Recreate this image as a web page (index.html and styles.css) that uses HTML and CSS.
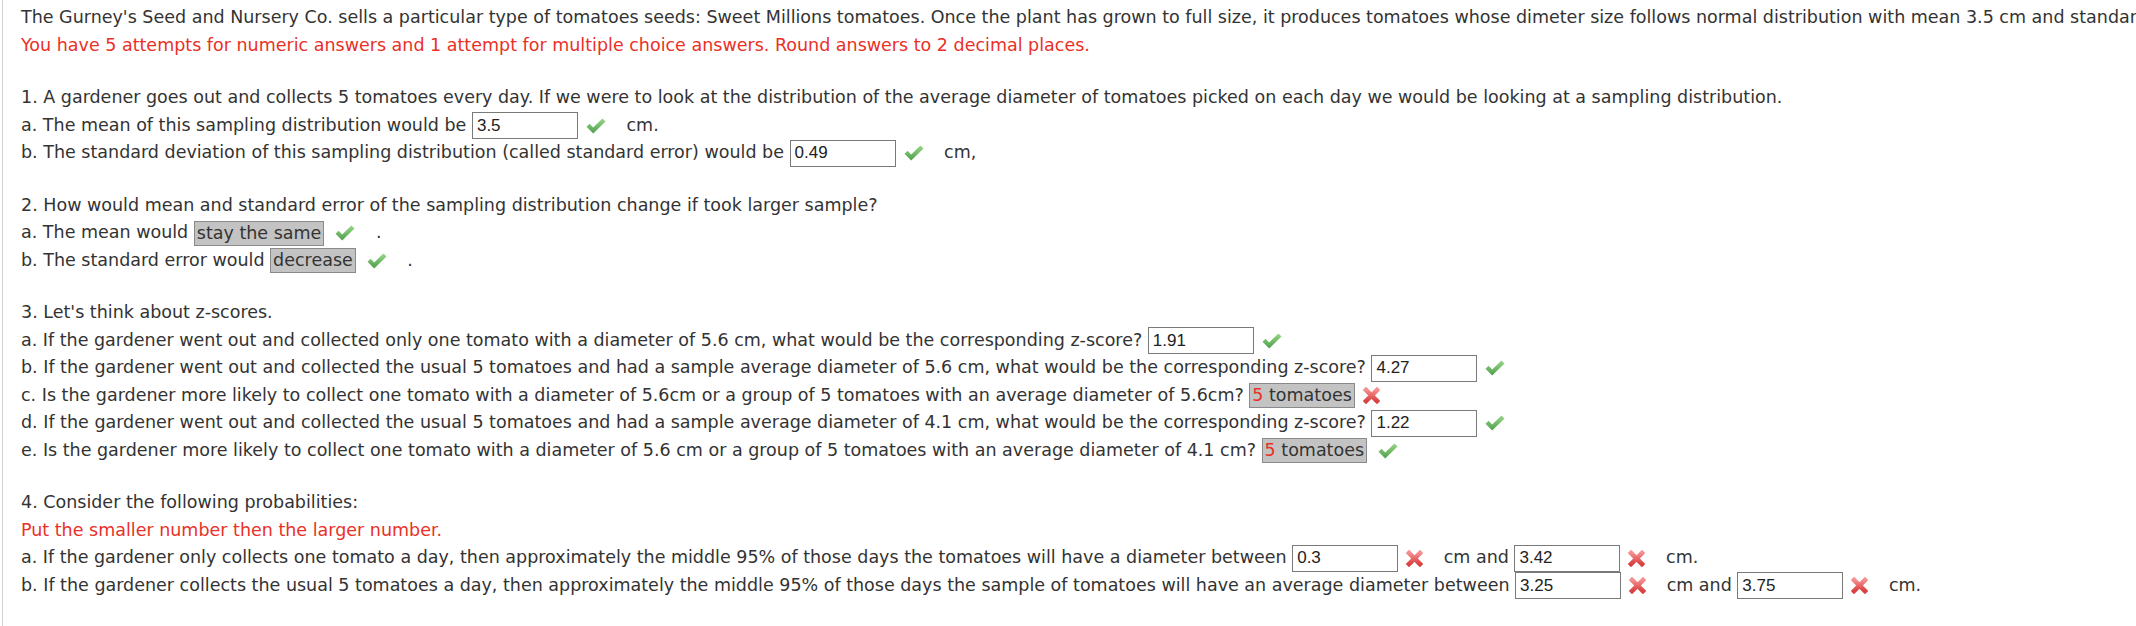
FILE: index.html
```
<!DOCTYPE html>
<html>
<head>
<meta charset="utf-8">
<link rel="stylesheet" href="styles.css">
</head>
<body>
<svg class="defs" width="0" height="0" aria-hidden="true">
  <defs>
    <linearGradient id="gck" x1="0" y1="0" x2="0" y2="1">
      <stop offset="0" stop-color="#9ad88a"/>
      <stop offset="1" stop-color="#4c9e4a"/>
    </linearGradient>
    <linearGradient id="gx" x1="0" y1="0" x2="0" y2="1">
      <stop offset="0" stop-color="#f49090"/>
      <stop offset="1" stop-color="#d9403f"/>
    </linearGradient>
    <symbol id="ck" viewBox="0 0 20 16">
      <polygon points="0.5,8.8 3.6,5.8 7.2,9.4 16.4,0.4 19.5,3.4 7.2,15.6" fill="url(#gck)"/>
    </symbol>
    <symbol id="xx" viewBox="0 0 17 17">
      <path d="M3 3 L14 14 M14 3 L3 14" stroke="url(#gx)" stroke-width="4.6" stroke-linecap="square" fill="none"/>
    </symbol>
  </defs>
</svg>
<div class="page">
  <section class="sec">
    <div class="ln">The Gurney's Seed and Nursery Co. sells a particular type of tomatoes seeds: Sweet Millions tomatoes. Once the plant has grown to full size, it produces tomatoes whose dimeter size follows normal distribution with mean 3.5 cm and standard deviation 1.1 cm.</div>
    <div class="ln red">You have 5 attempts for numeric answers and 1 attempt for multiple choice answers. Round answers to 2 decimal places.</div>
  </section>

  <section class="sec">
    <div class="ln">1. A gardener goes out and collects 5 tomatoes every day. If we were to look at the distribution of the average diameter of tomatoes picked on each day we would be looking at a sampling distribution.</div>
    <div class="ln">a. The mean of this sampling distribution would be <input class="ans" type="text" value="3.5" readonly><svg class="mk"><use href="#ck"/></svg> cm.</div>
    <div class="ln">b. The standard deviation of this sampling distribution (called standard error) would be <input class="ans" type="text" value="0.49" readonly><svg class="mk"><use href="#ck"/></svg> cm,</div>
  </section>

  <section class="sec">
    <div class="ln">2. How would mean and standard error of the sampling distribution change if took larger sample?</div>
    <div class="ln">a. The mean would <span class="sel">stay the same</span><svg class="mk sm"><use href="#ck"/></svg> .</div>
    <div class="ln">b. The standard error would <span class="sel">decrease</span><svg class="mk sm"><use href="#ck"/></svg> .</div>
  </section>

  <section class="sec">
    <div class="ln">3. Let's think about z-scores.</div>
    <div class="ln">a. If the gardener went out and collected only one tomato with a diameter of 5.6 cm, what would be the corresponding z-score? <input class="ans" type="text" value="1.91" readonly><svg class="mk"><use href="#ck"/></svg></div>
    <div class="ln">b. If the gardener went out and collected the usual 5 tomatoes and had a sample average diameter of 5.6 cm, what would be the corresponding z-score? <input class="ans" type="text" value="4.27" readonly><svg class="mk"><use href="#ck"/></svg></div>
    <div class="ln">c. Is the gardener more likely to collect one tomato with a diameter of 5.6cm or a group of 5 tomatoes with an average diameter of 5.6cm? <span class="sel"><span class="red">5</span> tomatoes</span><svg class="mk x"><use href="#xx"/></svg></div>
    <div class="ln">d. If the gardener went out and collected the usual 5 tomatoes and had a sample average diameter of 4.1 cm, what would be the corresponding z-score? <input class="ans" type="text" value="1.22" readonly><svg class="mk"><use href="#ck"/></svg></div>
    <div class="ln">e. Is the gardener more likely to collect one tomato with a diameter of 5.6 cm or a group of 5 tomatoes with an average diameter of 4.1 cm? <span class="sel"><span class="red">5</span> tomatoes</span><svg class="mk sm"><use href="#ck"/></svg></div>
  </section>

  <section class="sec">
    <div class="ln">4. Consider the following probabilities:</div>
    <div class="ln red">Put the smaller number then the larger number.</div>
    <div class="ln">a. If the gardener only collects one tomato a day, then approximately the middle 95% of those days the tomatoes will have a diameter between <input class="ans" type="text" value="0.3" readonly><svg class="mk x"><use href="#xx"/></svg> cm and <input class="ans" type="text" value="3.42" readonly><svg class="mk x"><use href="#xx"/></svg> cm.</div>
    <div class="ln">b. If the gardener collects the usual 5 tomatoes a day, then approximately the middle 95% of those days the sample of tomatoes will have an average diameter between <input class="ans" type="text" value="3.25" readonly><svg class="mk x"><use href="#xx"/></svg> cm and <input class="ans" type="text" value="3.75" readonly><svg class="mk x"><use href="#xx"/></svg> cm.</div>
  </section>
</div>
</body>
</html>
```
FILE: styles.css
```
html, body {
  margin: 0;
  padding: 0;
  overflow: hidden;
  background: #ffffff;
}

.defs {
  position: absolute;
  width: 0;
  height: 0;
}

.page {
  margin-left: 2px;
  border-left: 1px solid #d2d2d2;
  padding: 4px 0 0 18px;
  min-height: 626px;
  box-sizing: border-box;
  font-family: "DejaVu Sans", Verdana, sans-serif;
  font-size: 17.5px;
  color: #333333;
  white-space: nowrap;
}

.sec {
  margin-bottom: 25px;
}

.ln {
  height: 27.5px;
  line-height: 27.5px;
}

.red {
  color: #ea3027;
}

.ans {
  box-sizing: border-box;
  width: 106px;
  height: 27px;
  margin: 0;
  padding: 0 0 0 4px;
  border: 1px solid #7a7a7a;
  border-radius: 0;
  background: #ffffff;
  font-family: "Liberation Sans", Arial, sans-serif;
  font-size: 17px;
  color: #222222;
  vertical-align: middle;
  outline: none;
}

.sel {
  display: inline-block;
  box-sizing: border-box;
  height: 25px;
  line-height: 23px;
  padding: 0 2px;
  border: 1px solid #8a8a8a;
  background: #c3c3c3;
  vertical-align: middle;
}

.mk {
  width: 20px;
  height: 16px;
  margin: 0 15px 0 8px;
  vertical-align: middle;
}

.mk.sm {
  margin-left: 11px;
}

.mk.x {
  width: 17px;
  height: 17px;
  margin-right: 15px;
}
```
